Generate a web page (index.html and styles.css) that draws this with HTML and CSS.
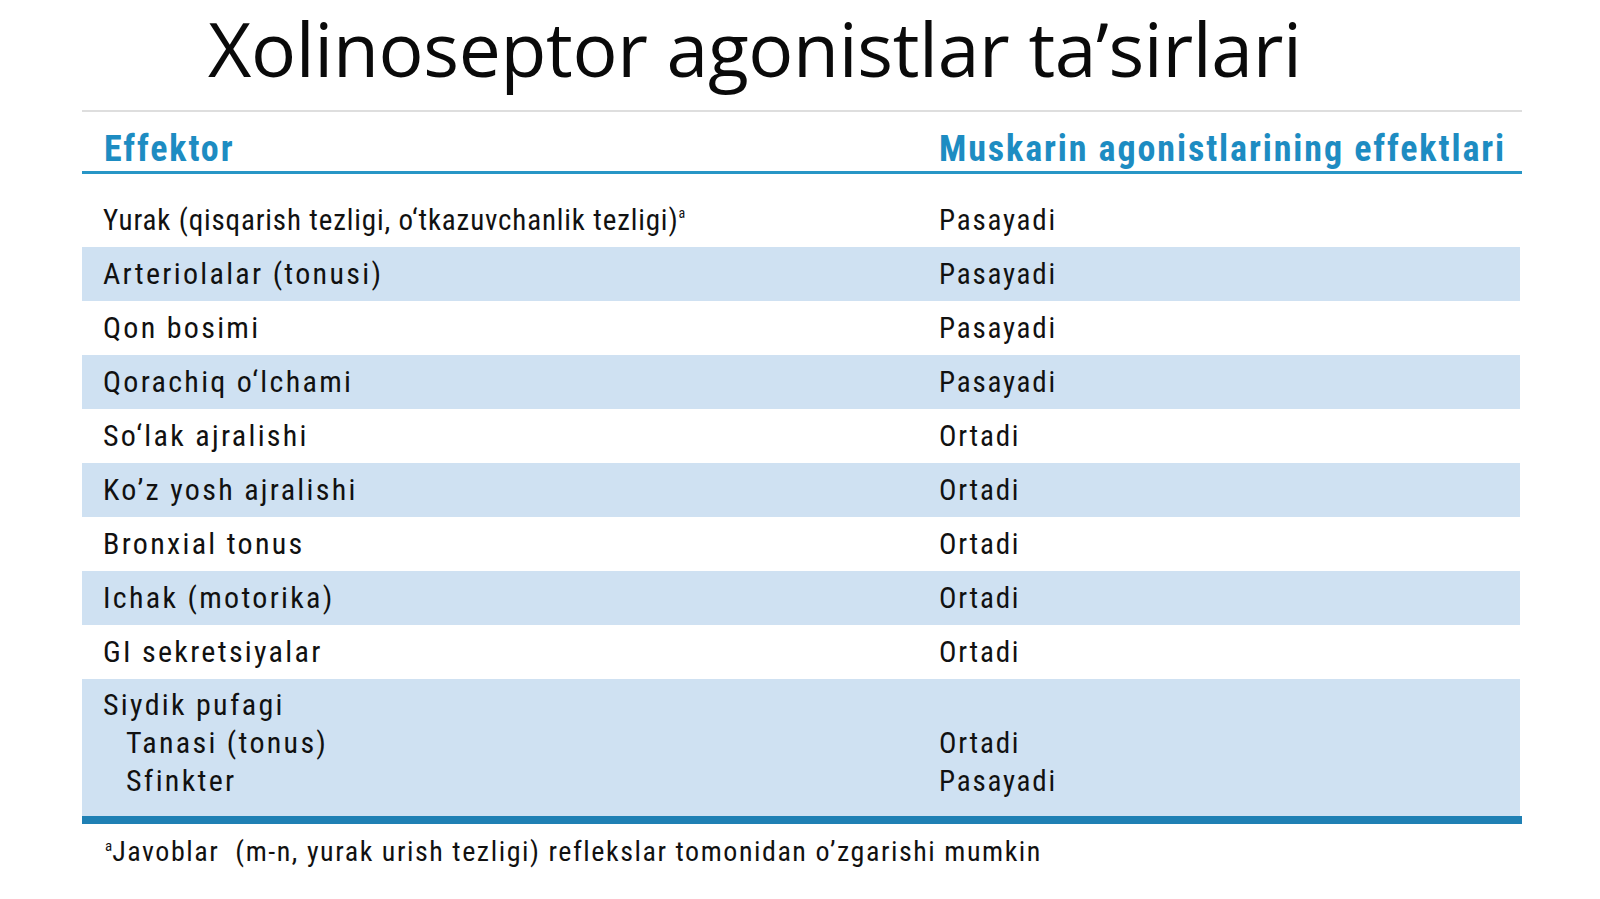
FILE: index.html
```html
<!DOCTYPE html>
<html lang="uz">
<head>
<meta charset="utf-8">
<title>Xolinoseptor agonistlar ta’sirlari</title>
<link rel="stylesheet" href="styles.css">
</head>
<body>
<h1 class="title">Xolinoseptor agonistlar ta’sirlari</h1>
<section class="effects">
  <div class="head">
    <div class="hcell">Effektor</div>
    <div class="hcell">Muskarin agonistlarining effektlari</div>
  </div>
  <div class="row first">
    <div class="cell tight">Yurak (qisqarish tezligi, o‘tkazuvchanlik tezligi)<sup class="note">a</sup></div>
    <div class="cell">Pasayadi</div>
  </div>
  <div class="row shade">
    <div class="cell">Arteriolalar (tonusi)</div>
    <div class="cell">Pasayadi</div>
  </div>
  <div class="row">
    <div class="cell">Qon bosimi</div>
    <div class="cell">Pasayadi</div>
  </div>
  <div class="row shade">
    <div class="cell">Qorachiq o‘lchami</div>
    <div class="cell">Pasayadi</div>
  </div>
  <div class="row">
    <div class="cell">So‘lak ajralishi</div>
    <div class="cell">Ortadi</div>
  </div>
  <div class="row shade">
    <div class="cell">Ko’z yosh ajralishi</div>
    <div class="cell">Ortadi</div>
  </div>
  <div class="row">
    <div class="cell">Bronxial tonus</div>
    <div class="cell">Ortadi</div>
  </div>
  <div class="row shade">
    <div class="cell">Ichak (motorika)</div>
    <div class="cell">Ortadi</div>
  </div>
  <div class="row">
    <div class="cell">GI sekretsiyalar</div>
    <div class="cell">Ortadi</div>
  </div>
  <div class="row shade multi">
    <div class="cell">
      <div class="line">Siydik pufagi</div>
      <div class="line sub">Tanasi (tonus)</div>
      <div class="line sub">Sfinkter</div>
    </div>
    <div class="cell">
      <div class="line">&nbsp;</div>
      <div class="line">Ortadi</div>
      <div class="line">Pasayadi</div>
    </div>
  </div>
  <p class="foot"><sup class="fnote">a</sup>Javoblar&nbsp; (m-n, yurak urish tezligi) reflekslar tomonidan o’zgarishi mumkin</p>
</section>
</body>
</html>
```
FILE: styles.css
```css
html, body {
  margin: 0;
  padding: 0;
  background: #ffffff;
}
body {
  width: 1600px;
  height: 899px;
  overflow: hidden;
  color: #111111;
  font-family: "Roboto", "Liberation Sans", sans-serif;
}
.title {
  margin: 3px 0 0 0;
  padding-left: 208px;
  font-family: "Open Sans", "Noto Sans", sans-serif;
  font-weight: 400;
  font-size: 75px;
  line-height: 90px;
  letter-spacing: -0.35px;
  color: #0a0a0a;
}
.effects {
  margin: 17px 0 0 82px;
  width: 1440px;
  border-top: 2px solid #dedede;
}
.head {
  display: grid;
  grid-template-columns: 857px 1fr;
  padding: 17px 0 2px 0;
  border-bottom: 3px solid #2896c6;
}
.hcell {
  font-weight: 700;
  font-stretch: 80%;
  font-size: 36px;
  line-height: 40px;
  letter-spacing: 1.9px;
  color: #1d8cc2;
  white-space: nowrap;
}
.hcell:first-child {
  padding-left: 22px;
}
.row {
  display: grid;
  grid-template-columns: 857px 1fr;
  height: 54px;
}
.row.first {
  margin-top: 19px;
}
.row.shade {
  background: #cfe1f2;
  width: 1438px;
}
.cell {
  font-size: 29px;
  line-height: 54px;
  font-stretch: 80%;
  letter-spacing: 1.8px;
  white-space: nowrap;
}
.cell:first-child {
  padding-left: 21px;
  font-size: 30px;
  letter-spacing: 2.3px;
}
.cell.tight:first-child {
  font-size: 29px;
  letter-spacing: 0.85px;
}
.note {
  font-size: 14px;
  vertical-align: 12px;
  line-height: 0;
  letter-spacing: 0;
}
.row.multi {
  height: auto;
  padding: 7px 0 16px 0;
}
.line {
  line-height: 38px;
}
.line.sub {
  padding-left: 23px;
}
.foot {
  margin: 0;
  border-top: 8px solid #1f80b4;
  padding: 11px 0 0 23px;
  font-size: 28px;
  line-height: 34px;
  font-stretch: 80%;
  letter-spacing: 1.55px;
  color: #111111;
}
.fnote {
  font-size: 15px;
  vertical-align: 10px;
  line-height: 0;
  letter-spacing: 0;
}
```
